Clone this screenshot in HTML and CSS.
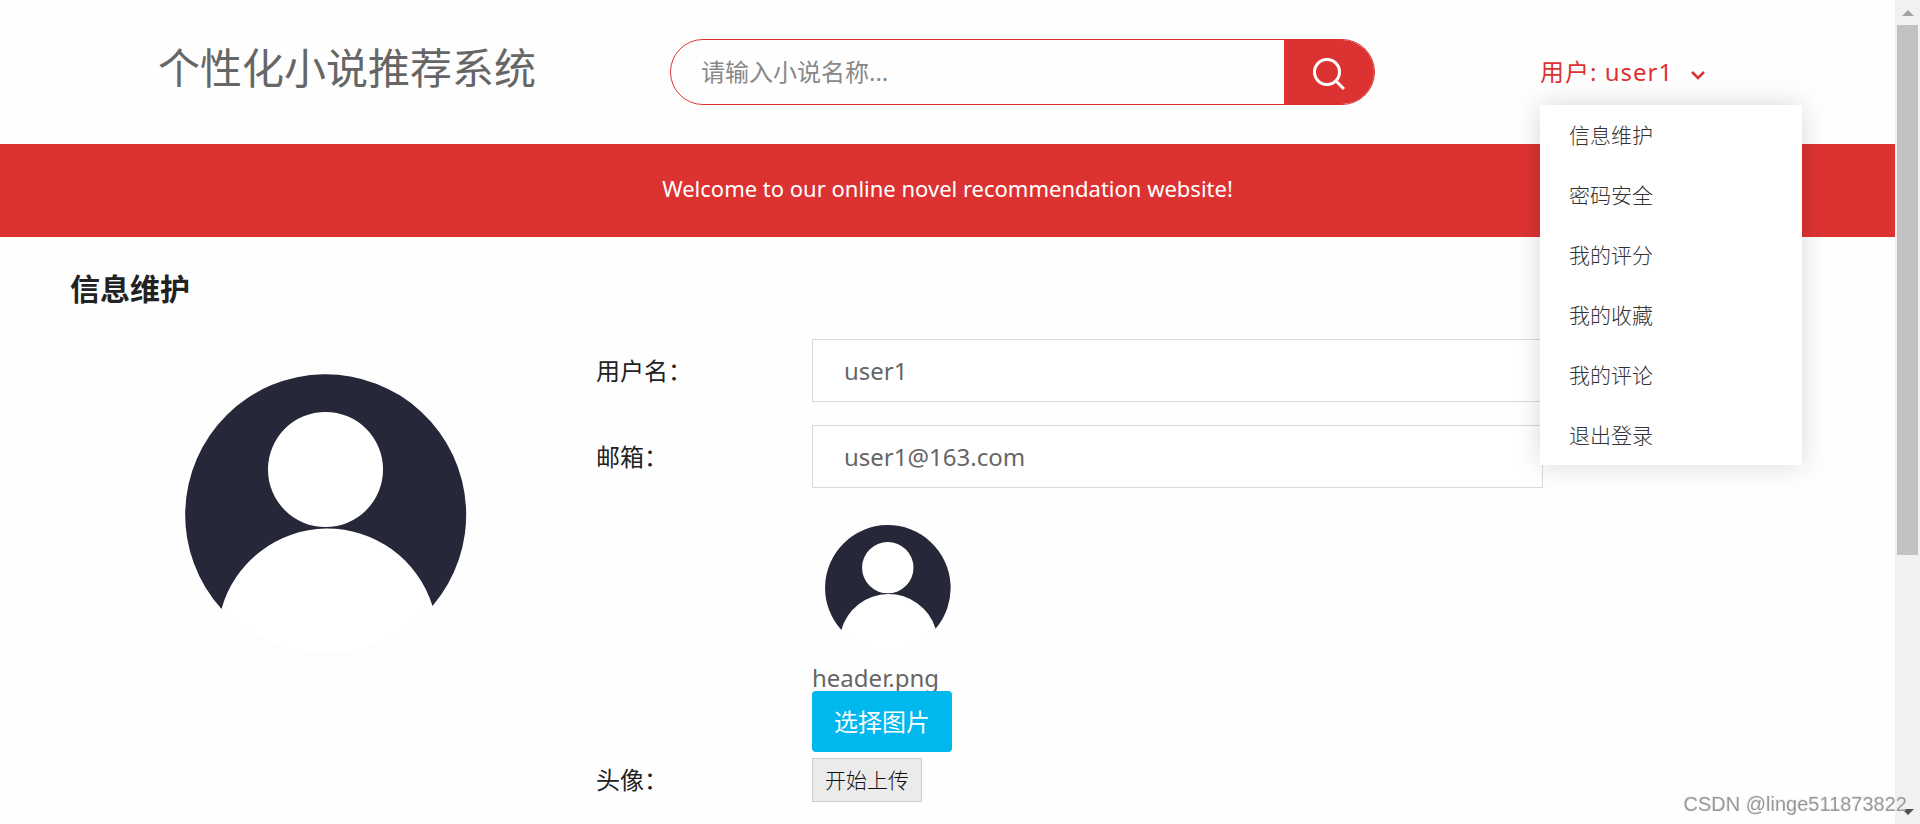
FILE: index.html
```html
<!DOCTYPE html>
<html lang="zh-CN">
<head>
<meta charset="utf-8">
<title>个性化小说推荐系统</title>
<link rel="stylesheet" href="styles.css">
</head>
<body>
<svg class="defs" aria-hidden="true">
  <symbol id="avatar" viewBox="0 0 282 282">
    <circle cx="141" cy="141" r="140" fill="#fff" stroke="#fafafa"/>
    <path fill="#262738" fill-rule="evenodd" d="M36.500 235A140.500 140.500 0 1 1 247.500 232A110 110 0 0 0 36.500 235ZM140.500 38A57.500 57.500 0 1 0 140.500 153A57.500 57.500 0 1 0 140.500 38Z"/>
  </symbol>
</svg>
<div class="window">
  <div class="page">
    <header class="header">
      <h1 class="brand">个性化小说推荐系统</h1>
      <form class="search">
        <input class="search-input" type="text" aria-label="小说名称" placeholder="请输入小说名称...">
        <button class="search-button" type="button" aria-label="搜索">
          <svg class="search-icon" viewBox="0 0 32 32"><circle cx="14" cy="14" r="12.500" /><path d="M22.500 22.500L31 31"/></svg>
        </button>
      </form>
      <div class="account">
        <button class="account-button" type="button"><span>用户: user1</span>
          <svg class="chevron" viewBox="0 0 14 10"><path d="M1 2L7 8L13 2"/></svg>
        </button>
        <nav class="menu">
          <a class="menu-item" href="#">信息维护</a>
          <a class="menu-item" href="#">密码安全</a>
          <a class="menu-item" href="#">我的评分</a>
          <a class="menu-item" href="#">我的收藏</a>
          <a class="menu-item" href="#">我的评论</a>
          <a class="menu-item" href="#">退出登录</a>
        </nav>
      </div>
    </header>
    <p class="banner">Welcome to our online novel recommendation website!</p>
    <main class="main">
      <h2 class="heading">信息维护</h2>
      <div class="profile">
        <div class="portrait"><svg class="portrait-image"><use href="#avatar"/></svg></div>
        <form class="form">
          <label class="label" for="username">用户名：</label>
          <input class="field" id="username" type="text" value="user1">
          <label class="label" for="email">邮箱：</label>
          <input class="field" id="email" type="text" value="user1@163.com">
          <span class="label label-bottom">头像：</span>
          <div class="upload">
            <div class="thumb"><svg class="thumb-image"><use href="#avatar"/></svg></div>
            <span class="filename">header.png</span>
            <button class="pick" type="button">选择图片</button>
            <button class="send" type="button">开始上传</button>
          </div>
        </form>
      </div>
    </main>
  </div>
  <div class="scrollbar" aria-hidden="true">
    <svg class="arrow arrow-up" viewBox="0 0 12 6"><path d="M0 6L6 0L12 6Z"/></svg>
    <div class="track"><div class="thumb-bar"></div></div>
    <svg class="arrow arrow-down" viewBox="0 0 12 6"><path d="M0 0L6 6L12 0Z"/></svg>
  </div>
</div>
<div class="watermark">CSDN @linge511873822</div>
</body>
</html>
```
FILE: styles.css
```css
* { box-sizing: border-box; }
body {
  margin: 0;
  font-family: "Noto Sans", "Noto Sans CJK SC", sans-serif;
  font-size: 24px;
  color: #222;
  background: #fff;
}
button, input { font: inherit; margin: 0; }
.defs { display: none; }
.window { display: flex; height: 100vh; overflow: hidden; }
.page { flex: 1; min-width: 0; background: #fefefe; }

.header {
  display: grid;
  grid-template-columns: 512fr 870fr 355fr;
  align-items: center;
  height: 144px;
  padding-left: 158px;
}
.brand {
  margin: 0;
  padding-bottom: 12px;
  font-family: "Noto Sans CJK SC", sans-serif;
  font-size: 42px;
  line-height: 60px;
  font-weight: 400;
  color: #666;
}
.search {
  display: flex;
  width: 81%;
  height: 66px;
  border: 1px solid #dd3232;
  border-radius: 33px;
  overflow: hidden;
}
.search-input {
  flex: 1;
  min-width: 0;
  padding: 0 30px 2px;
  border: 0;
  outline: 0;
  background: transparent;
  color: #666;
}
.search-input::placeholder { color: #888; opacity: 1; }
.search-button {
  display: flex;
  align-items: center;
  width: 90px;
  padding: 4px 0 0 29px;
  border: 0;
  background: #dd3232;
}
.search-icon { width: 32px; height: 32px; fill: none; stroke: #fff; stroke-width: 3; }
.account { position: relative; z-index: 2; }
.account-button {
  display: flex;
  align-items: center;
  gap: 18px;
  height: 66px;
  padding: 0 0 3px;
  border: 0;
  background: none;
  color: #dd3232;
  letter-spacing: 1px;
}
.chevron { width: 14px; height: 10px; margin-top: 8px; fill: none; stroke: #dd3232; stroke-width: 2.5; }
.menu {
  position: absolute;
  top: 100%;
  left: 0;
  width: 262px;
  background: #fff;
  box-shadow: 0 0 25px rgba(0, 0, 0, 0.15);
}
.menu-item {
  display: block;
  padding: 1px 29px 0;
  font-size: 21px;
  font-weight: 300;
  line-height: 59px;
  color: #333;
  text-decoration: none;
}

.banner {
  margin: 0;
  padding-bottom: 5px;
  font-size: 22px;
  line-height: 88px;
  text-align: center;
  color: #fff;
  background: #dd3232;
}

.main { padding: 30px 70px 0; }
.heading { margin: 0; font-size: 30px; line-height: 44px; }
.profile { display: grid; grid-template-columns: 512fr 947fr 268fr; column-gap: 14px; padding-top: 28px; }
.portrait { display: flex; justify-content: center; align-items: flex-start; padding-top: 35px; }
.portrait-image { width: 282px; height: 282px; }
.form { display: grid; grid-template-columns: 216fr 731fr; row-gap: 23px; }
.label { align-self: center; line-height: 44px; }
.label-bottom { align-self: end; }
.field {
  width: 100%;
  height: 63px;
  padding: 0 31px;
  border: 1px solid #d9d9d9;
  background: #fff;
  color: #666;
}
.upload { display: flex; flex-direction: column; align-items: flex-start; }
.thumb { display: flex; width: 152px; padding: 14px 13px 13px; }
.thumb-image { width: 126px; height: 126px; }
.filename { line-height: 27px; color: #666; }
.pick {
  height: 61px;
  padding: 0 22px 2px;
  border: 0;
  border-radius: 4px;
  background: #00b7ee;
  color: #fff;
}
.send {
  height: 44px;
  margin-top: 6px;
  padding: 0 12px 2px;
  border: 1px solid #ccc;
  background: #ebebeb;
  font-size: 21px;
  font-weight: 300;
  color: #111;
}

.scrollbar {
  display: flex;
  flex-direction: column;
  align-items: center;
  width: 25px;
  background: #f1f1f1;
}
.arrow { width: 12px; height: 6px; margin: 10px 0 9px; fill: #a3a3a3; }
.arrow-down { fill: #505050; }
.track { flex: 1; width: 21px; }
.thumb-bar { height: 68.5%; background: #c1c1c1; }
.watermark {
  position: fixed;
  right: 13px;
  bottom: 7px;
  font-family: "Liberation Sans", sans-serif;
  font-size: 20px;
  line-height: 26px;
  color: #999;
  text-shadow: -1px -1px 0 #eee;
}
```
